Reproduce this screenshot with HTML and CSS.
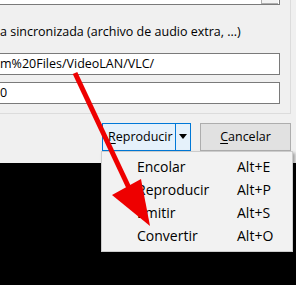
FILE: index.html
```html
<!DOCTYPE html>
<html lang="es">
  <head>
    <meta charset="UTF-8" />
    <title>Abrir medio</title>
    <link rel="stylesheet" href="styles.css">
  </head>
  <body>
    <div class="screen">
      <div class="dialog">
        <div class="group">
          <div class="combo"><span class="spin"></span></div>
          <p class="label">a sincronizada (archivo de audio extra, ...)</p>
          <div class="field">m%20Files/VideoLAN/VLC/</div>
          <div class="field">0</div>
        </div>
        <div class="actions">
          <div class="split">
            <span class="split-main"><u>R</u>eproducir</span>
            <span class="split-drop"></span>
          </div>
          <div class="btn"><u>C</u>ancelar</div>
        </div>
      </div>

      <ul class="menu">
        <li><span>Encolar</span><span>Alt+E</span></li>
        <li><span>Reproducir</span><span>Alt+P</span></li>
        <li><span>Emitir</span><span>Alt+S</span></li>
        <li><span>Convertir</span><span>Alt+O</span></li>
      </ul>

      <!-- red pointer drawn over the screenshot -->
      <svg class="arrow" width="296" height="285" viewBox="0 0 296 285">
        <line x1="75" y1="73" x2="129" y2="188" stroke="#ee0000" stroke-width="5" />
        <polygon points="150,226 112,195 141,179" fill="#ee0000" />
      </svg>
    </div>
  </body>
</html>
```

FILE: styles.css
```css
body {
  margin: 0;
  background: #000;
  font-family: "Open Sans", "Noto Sans", sans-serif;
  font-size: 12.5px;
  color: #000;
}

.screen {
  position: relative;
  width: 296px;
  height: 285px;
  overflow: hidden;
}

.dialog {
  height: 163px;
  background: #f0f0f0;
}

.group {
  box-sizing: border-box;
  width: 291px;
  height: 114px;
  border-right: 1px solid #dcdcdc;
  border-bottom: 1px solid #dcdcdc;
}

.combo {
  box-sizing: border-box;
  display: flex;
  justify-content: flex-end;
  width: 280px;
  height: 5px;
  background: #fff;
  border-right: 1px solid #7a7a7a;
  border-bottom: 1px solid #7a7a7a;
}

.spin {
  width: 16px;
  height: 3px;
  margin-right: 1px;
  border-left: 1px solid #adadad;
  border-bottom: 1px solid #adadad;
  background: #f3f3f3;
}

.label {
  margin: 19px 0 0;
  height: 16px;
  line-height: 16px;
  white-space: nowrap;
}

.field {
  box-sizing: border-box;
  width: 282px;
  height: 22px;
  margin: 13px 0 0 -2px;
  padding-left: 1px;
  background: #fff;
  border: 1px solid #7a7a7a;
  line-height: 20px;
  white-space: nowrap;
  overflow: hidden;
}

.field + .field {
  margin-top: 7px;
}

.actions {
  display: flex;
  justify-content: flex-end;
  gap: 9px;
  padding: 9px 5px 0 0;
}

.split {
  box-sizing: border-box;
  display: flex;
  height: 28px;
  width: 89px;
  background: #e5f1fb;
  border: 1px solid #0078d7;
}

.split-main {
  width: 73px;
  padding-left: 5px;
  box-sizing: border-box;
  line-height: 26px;
  border-right: 1px solid #0078d7;
}

.split-drop {
  flex: 1;
  position: relative;
}

.split-drop::after {
  content: "";
  position: absolute;
  left: 3px;
  top: 10px;
  border-left: 4px solid transparent;
  border-right: 4px solid transparent;
  border-top: 5px solid #000;
}

.btn {
  box-sizing: border-box;
  width: 91px;
  height: 28px;
  background: #e1e1e1;
  border: 1px solid #adadad;
  text-align: center;
  line-height: 26px;
}

u {
  text-underline-offset: 2px;
}

.menu {
  position: absolute;
  left: 101px;
  top: 151px;
  box-sizing: border-box;
  width: 192px;
  height: 101px;
  margin: 0;
  padding: 3px 0 4px;
  list-style: none;
  background: #f2f2f2;
  border: 1px solid #cccccc;
  box-shadow: 2px 2px 3px rgba(0, 0, 0, 0.35);
  font-size: 14px;
}

.menu li {
  display: grid;
  grid-template-columns: 100px auto;
  height: 23px;
  line-height: 23px;
  padding-left: 35px;
}

.arrow {
  position: absolute;
  left: 0;
  top: 0;
}
```
